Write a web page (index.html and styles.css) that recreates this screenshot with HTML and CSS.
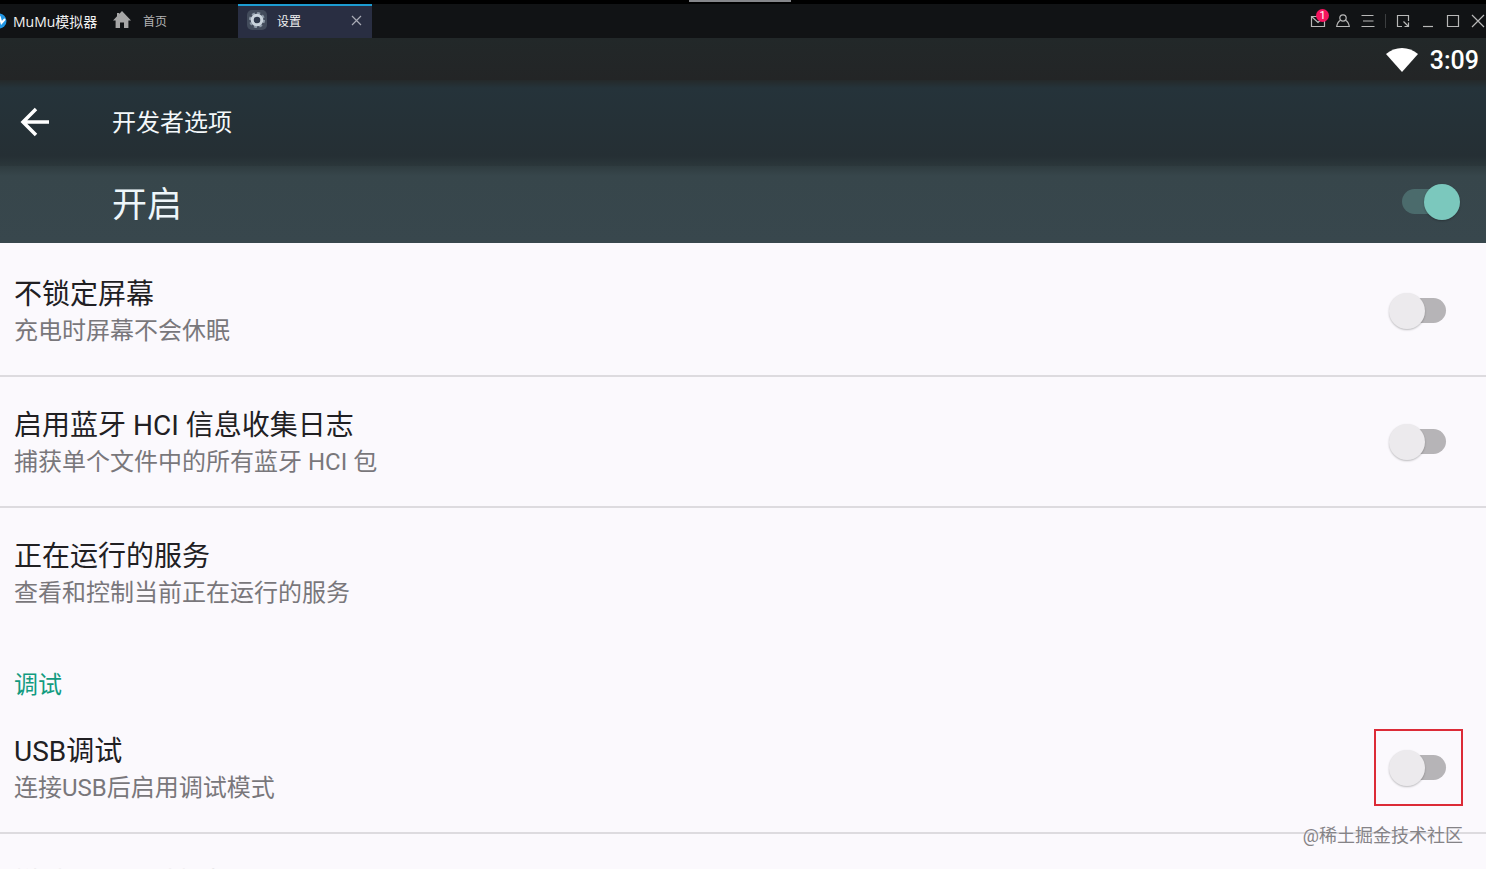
FILE: index.html
```html
<!DOCTYPE html>
<html lang="zh-CN">

<head>
  <meta charset="UTF-8">
  <meta name="viewport" content="width=device-width, initial-scale=1.0">
  <title>开发者选项</title>
  <link rel="stylesheet" href="styles.css">
</head>

<body>
  <div class="emulator">
    <header class="titlebar">
      <div class="handle"></div>
      <div class="brand">
        <svg class="brand-logo" width="7" height="16" viewBox="9 0 7 16">
          <circle cx="8" cy="8" r="7.5" fill="#2196e3"/>
          <path d="M6 9l3-4 1.5 5L14 6" fill="none" stroke="#fff" stroke-width="2"/>
        </svg>
        <span>MuMu模拟器</span>
      </div>
      <nav class="tabs">
        <button class="tab tab-home" type="button">
          <svg width="18" height="18" viewBox="0 0 18 18" fill="#a6a6a6">
            <path d="M9 0L18 9.5h-2.6V17H11v-5.5H7V17H2.6V9.5H0L4 5.3V2h2.2v1z"/>
          </svg>
          <span>首页</span>
        </button>
        <div class="tab tab-active">
          <svg width="20" height="20" viewBox="0 0 20 20">
            <rect width="20" height="20" rx="5" fill="#434c5c"/>
            <circle cx="10" cy="10" r="7" fill="none" stroke="#8d99a6" stroke-width="2" stroke-dasharray="3 2.5"/>
            <circle cx="10" cy="10" r="4.8" fill="#303a4c" stroke="#c9d3dc" stroke-width="3"/>
          </svg>
          <span>设置</span>
          <button class="tab-close" type="button" aria-label="关闭标签">
            <svg width="11" height="11" viewBox="0 0 11 11" stroke="#a9abb5" stroke-width="1.2">
              <path d="M1 1l9 9M10 1l-9 9"/>
            </svg>
          </button>
        </div>
      </nav>
      <div class="window-tools">
        <button type="button" aria-label="消息">
          <svg width="16" height="16" viewBox="0 0 16 16">
            <path d="M1.5 3.5h13v10h-13zM1.5 3.5L8 9.5l6.5-6"/>
          </svg>
          <span class="badge">1</span>
        </button>
        <button type="button" aria-label="账号">
          <svg width="16" height="16" viewBox="0 0 16 16">
            <circle cx="8" cy="5" r="3.2"/>
            <path d="M5.5 7.3C3.2 8.5 2.2 10.5 1.7 13.5h12.6c-.5-3-1.5-5-3.8-6.2"/>
          </svg>
        </button>
        <button type="button" aria-label="菜单">
          <svg width="16" height="16" viewBox="0 0 16 16">
            <path d="M1.5 2.5h12M3 8h10.5M1.5 13.5h13"/>
          </svg>
        </button>
        <span class="divider"></span>
        <button type="button" aria-label="全屏">
          <svg width="16" height="16" viewBox="0 0 16 16">
            <path d="M7 13.5H2.5v-11h11V8M8.5 8.5l5 5M13.5 9.5v4h-4"/>
          </svg>
        </button>
        <button type="button" aria-label="最小化">
          <svg width="16" height="16" viewBox="0 0 16 16"><path d="M3 13.5h10"/></svg>
        </button>
        <button type="button" aria-label="最大化">
          <svg width="16" height="16" viewBox="0 0 16 16"><path d="M2.5 2.5h11v11h-11z"/></svg>
        </button>
        <button type="button" aria-label="关闭">
          <svg width="16" height="16" viewBox="0 0 16 16"><path d="M2 2l12 12M14 2L2 14"/></svg>
        </button>
      </div>
    </header>

    <div class="statusbar">
      <svg width="32" height="24" viewBox="0 0 32 24" fill="#fff">
        <path d="M0 6C9-2 23-2 32 6L16 24z"/>
      </svg>
      <span>3:09</span>
    </div>

    <div class="appbar">
      <button class="back" type="button" aria-label="返回">
        <svg width="30" height="30" viewBox="0 0 30 30" fill="none" stroke="#fff" stroke-width="3.5">
          <path d="M29 15H3M16 2L3 15l13 13"/>
        </svg>
      </button>
      <h1>开发者选项</h1>
    </div>

    <label class="master">
      <span>开启</span>
      <input class="switch" type="checkbox" checked>
    </label>

    <main class="settings">
      <label class="row">
        <span class="row-text">
          <span class="row-title">不锁定屏幕</span>
          <span class="row-summary">充电时屏幕不会休眠</span>
        </span>
        <input class="switch" type="checkbox">
      </label>
      <label class="row">
        <span class="row-text">
          <span class="row-title">启用蓝牙 HCI 信息收集日志</span>
          <span class="row-summary">捕获单个文件中的所有蓝牙 HCI 包</span>
        </span>
        <input class="switch" type="checkbox">
      </label>
      <div class="row row-last">
        <span class="row-text">
          <span class="row-title">正在运行的服务</span>
          <span class="row-summary">查看和控制当前正在运行的服务</span>
        </span>
      </div>

      <h2 class="category">调试</h2>
      <label class="row">
        <span class="row-text">
          <span class="row-title">USB调试</span>
          <span class="row-summary">连接USB后启用调试模式</span>
        </span>
        <span class="marked">
          <input class="switch" type="checkbox">
        </span>
      </label>
      <div class="row row-disabled">
        <span class="row-text">
          <span class="row-title">撤消USB调试授权</span>
        </span>
      </div>
    </main>

    <div class="watermark">@稀土掘金技术社区</div>
  </div>
</body>

</html>
```
FILE: styles.css
```css
* {
  box-sizing: border-box;
}

body {
  margin: 0;
  font-family: Roboto, "Noto Sans CJK SC", sans-serif;
}

button {
  padding: 0;
  border: 0;
  background: none;
  color: inherit;
  font: inherit;
  cursor: pointer;
}

svg {
  display: block;
  flex: none;
}

.emulator {
  position: relative;
  display: flex;
  flex-direction: column;
  height: 100vh;
  overflow: hidden;
  background: #fbf9fd;
}

.emulator > * {
  flex: none;
}

/* title bar */
.titlebar {
  position: relative;
  display: flex;
  height: 38px;
  border-top: 4px solid #000;
  background: #111315;
  color: #f2f2f2;
}

.handle {
  position: absolute;
  top: -4px;
  left: 50%;
  width: 102px;
  height: 2px;
  margin-left: -54px;
  background: #85868a;
}

.brand {
  display: flex;
  align-items: center;
  gap: 6px;
  width: 113px;
  font-family: "Open Sans", "Noto Sans CJK SC", sans-serif;
  font-size: 14px;
  white-space: nowrap;
}

.tabs {
  display: flex;
  flex: 1;
}

.tab {
  display: flex;
  align-items: center;
  padding-bottom: 2px;
  font-size: 12px;
}

.tab-home {
  gap: 12px;
  width: 125px;
  color: #b4b4b4;
}

.tab-active {
  gap: 10px;
  width: 134px;
  padding: 0 10px 4px 9px;
  border-top: 2px solid #1c9bd1;
  background: #292e42;
}

.tab-close {
  margin-left: auto;
}

.window-tools {
  display: flex;
  align-items: center;
  gap: 9px;
}

.window-tools button {
  position: relative;
}

.window-tools svg {
  fill: none;
  stroke: #b8b8b8;
  stroke-width: 1.2;
}

.divider {
  width: 1px;
  height: 14px;
  background: #3c3e40;
}

.badge {
  position: absolute;
  top: -4px;
  right: -3px;
  width: 13px;
  height: 13px;
  border-radius: 50%;
  background: #f5145f;
  color: #fff;
  font-size: 11px;
  line-height: 13px;
  text-align: center;
}

/* android bars */
.statusbar {
  display: flex;
  align-items: center;
  justify-content: flex-end;
  gap: 12px;
  height: 42px;
  padding: 2px 7px 0 0;
  background: linear-gradient(#222829, #232526);
  color: #fff;
  font-size: 25px;
  font-weight: 500;
}

.appbar {
  display: flex;
  align-items: center;
  height: 86px;
  padding: 0 0 2px 20px;
  background: linear-gradient(#24292a, #25333a 8px, #252f34 76px, #2b373b);
}

.back {
  width: 92px;
}

.appbar h1 {
  margin: 0;
  padding-bottom: 4px;
  color: #f4f8fa;
  font-size: 24px;
  font-weight: 400;
}

.master {
  display: flex;
  align-items: center;
  justify-content: space-between;
  height: 77px;
  padding: 0 26px 6px 112px;
  background: linear-gradient(#2f3c40, #37464b 10px, #38474d);
  color: #eef6fa;
  font-size: 35px;
}

/* switch */
.switch {
  position: relative;
  flex: none;
  width: 58px;
  height: 36px;
  margin: 0;
  appearance: none;
  cursor: pointer;
}

.switch::before {
  content: "";
  position: absolute;
  top: 5px;
  left: 4px;
  right: 0;
  height: 25px;
  border-radius: 13px;
  background: #b6b4b7;
}

.switch::after {
  content: "";
  position: absolute;
  top: 0;
  left: 1px;
  width: 36px;
  height: 36px;
  border-radius: 50%;
  background: #eceaed;
  box-shadow: 0 1px 2px rgba(0, 0, 0, 0.25);
}

.switch:checked::before {
  left: 0;
  right: 4px;
  background: #4b6b6c;
}

.switch:checked::after {
  left: 22px;
  background: #7bc8bd;
}

/* settings list */
.settings {
  padding-top: 3px;
}

.row {
  display: flex;
  align-items: center;
  justify-content: space-between;
  height: 131px;
  padding: 0 40px 0 14px;
  border-bottom: 2px solid #dddbdf;
}

.row-last {
  border-bottom-color: transparent;
}

.row-text {
  display: flex;
  flex-direction: column;
  padding-top: 5px;
}

.row-title,
.row-summary,
.category {
  line-height: 36px;
}

.row-title {
  color: #212023;
  font-size: 28px;
}

.row-summary {
  color: #79777b;
  font-size: 24px;
}

.row-disabled {
  align-items: flex-start;
  padding-top: 27px;
  color: #dedce0;
}

.row-disabled .row-title {
  color: inherit;
}

.category {
  margin: 0;
  padding: 28px 14px 0;
  color: #129b80;
  font-size: 24px;
  font-weight: 400;
}

.marked {
  position: relative;
  display: flex;
}

.marked::after {
  content: "";
  position: absolute;
  inset: -21px -17px -20px -14px;
  border: 2px solid #dc2b37;
  pointer-events: none;
}

.watermark {
  position: absolute;
  right: 23px;
  bottom: 19px;
  color: #858387;
  font-size: 18px;
  line-height: 28px;
}
```
